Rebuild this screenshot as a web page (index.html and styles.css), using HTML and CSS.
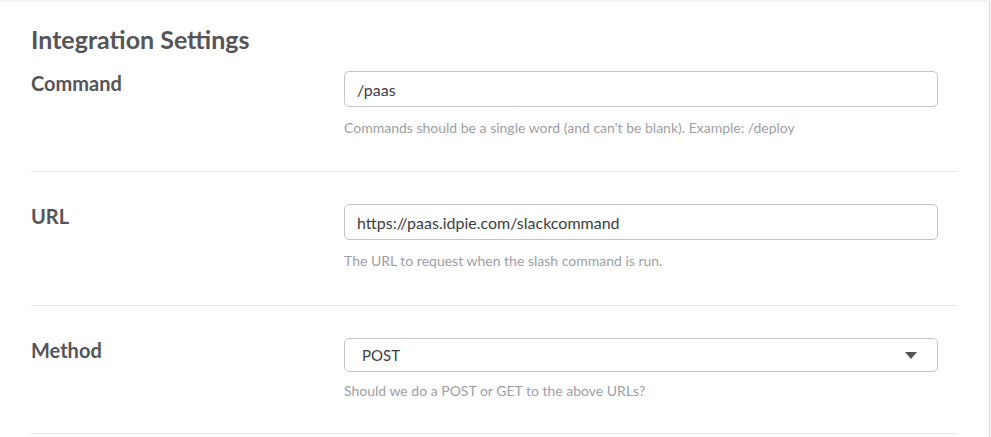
FILE: index.html
```html
<!DOCTYPE html>
<html lang="en">
<head>
<meta charset="utf-8">
<title>Integration Settings</title>
<link rel="stylesheet" href="styles.css">
</head>
<body>
<div class="page">
  <main class="card">
    <h2 class="title">Integration Settings</h2>
    <section class="row row-first">
      <label class="label" for="cmd">Command</label>
      <div class="field">
        <input id="cmd" class="input" type="text" value="/paas">
        <p class="hint">Commands should be a single word (and can't be blank). Example: /deploy</p>
      </div>
    </section>
    <section class="row">
      <label class="label" for="url">URL</label>
      <div class="field">
        <input id="url" class="input" type="text" value="https://paas.idpie.com/slackcommand">
        <p class="hint">The URL to request when the slash command is run.</p>
      </div>
    </section>
    <section class="row row-last">
      <label class="label" for="method">Method</label>
      <div class="field">
        <div class="select" id="method">
          <span class="select-value">POST</span>
          <svg class="caret" width="12" height="7" viewBox="0 0 12 7"><path d="M0 0H12L6 7Z" fill="#555459"/></svg>
        </div>
        <p class="hint hint-select">Should we do a POST or GET to the above URLs?</p>
      </div>
    </section>
  </main>
  <div class="gutter"></div>
</div>
</body>
</html>
```
FILE: styles.css
```css
* { box-sizing: border-box; }
html, body {
  margin: 0;
  padding: 0;
  background: #ffffff;
  font-family: Lato, "Open Sans", "Liberation Sans", sans-serif;
  color: #555459;
}
.page {
  display: flex;
  height: 437px;
  overflow: hidden;
}
.card {
  width: 990px;
  flex: none;
  border-top: 2px solid #f2f2f2;
  border-right: 1px solid #dcdcdc;
  padding: 0 32px 0 31px;
  background: #fff;
}
.gutter {
  flex: 1;
  background: #f4f4f4;
}
.title {
  margin: 0;
  padding-top: 23px;
  font-size: 25px;
  line-height: 28px;
  font-weight: 700;
  color: #555459;
}
.row {
  display: grid;
  grid-template-columns: 313px 594px;
  padding: 32px 0 34px;
  border-bottom: 1px solid #e8e8e8;
}
.row-first { padding-top: 18px; padding-bottom: 33px; }
.row-last { padding-top: 32px; padding-bottom: 32px; }
.label {
  font-size: 20px;
  line-height: 24px;
  font-weight: 700;
  color: #555459;
}
.field { display: flex; flex-direction: column; }
.input {
  display: block;
  width: 594px;
  height: 36px;
  margin: 0;
  padding: 0 12px;
  border: 1px solid #c5c5c5;
  border-radius: 5px;
  font-family: Lato, "Open Sans", "Liberation Sans", sans-serif;
  font-size: 16px;
  color: #3d3c40;
  background: #fff;
  outline: none;
}
.select {
  display: flex;
  align-items: center;
  justify-content: space-between;
  height: 34px;
  padding: 0 20px 0 17px;
  border: 1px solid #c5c5c5;
  border-radius: 5px;
  font-size: 15px;
  color: #3d3c40;
}
.caret { display: block; }
.hint {
  margin: 11px 0 0;
  font-size: 14px;
  line-height: 20px;
  color: #9e9ea6;
}
.hint-select { margin-top: 9px; }
```
